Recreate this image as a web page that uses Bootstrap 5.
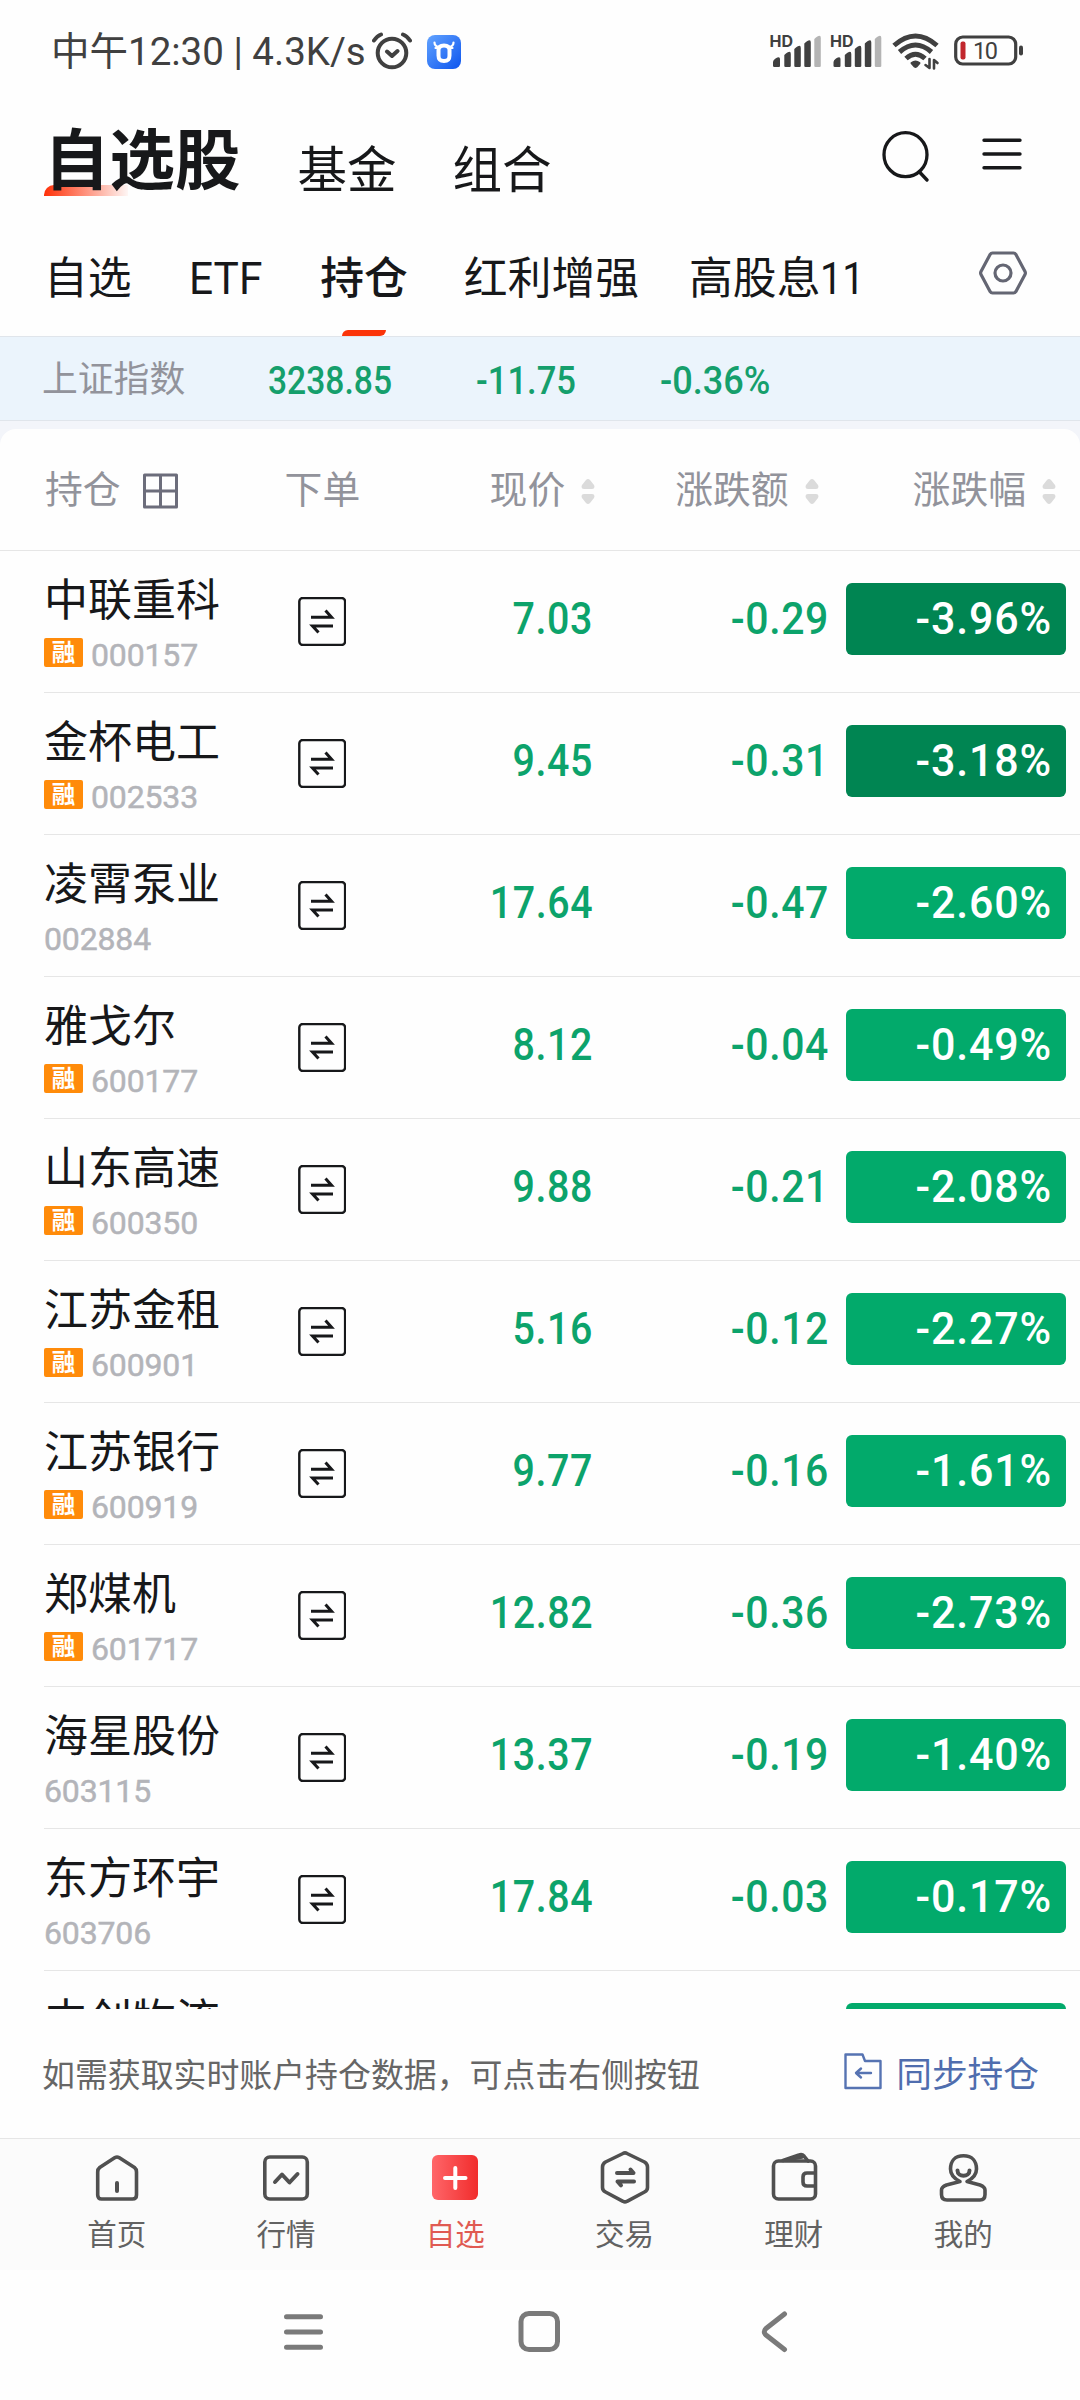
<!DOCTYPE html>
<html lang="zh-CN">
<head>
<meta charset="utf-8">
<meta name="viewport" content="width=device-width, initial-scale=1">
<title>自选股 - 持仓</title>
<link href="https://cdn.jsdelivr.net/npm/bootstrap@5.3.0/dist/css/bootstrap.min.css" rel="stylesheet">
<style>
body{width:1080px;height:2400px;overflow:hidden;background:#fefefe;color:#17181a;font-family:Roboto,"Noto Sans CJK SC",sans-serif;line-height:1}
svg{display:block;flex:none;fill:none;stroke-linecap:round;stroke-linejoin:round}
.statusbar{height:102px;padding:0 56px 0 51px;color:#404040;font-size:38.5px}
.clocktext{width:321px;white-space:pre;line-height:44px;padding-top:2px}
.titlebar{height:123px;padding:0 57px 0 44px}
.maintitle{font-size:65.5px;font-weight:700;line-height:76px;padding-left:0;margin-top:22px;position:relative}
.maintitle::before{content:"";position:absolute;left:0;top:61px;width:84px;height:11px;border-radius:10px 0 0 0;background:linear-gradient(90deg,#ff3008,#ff30080a)}
.maintitle span{position:relative}
.subtitle{font-size:49.5px;line-height:56px;margin-top:41px}
.tabs-line{height:111px;padding:0 53px 0 44px;font-size:43.8px}
.tabitem{line-height:50px;margin-top:29px;white-space:nowrap;position:relative}
.tabitem.current{font-weight:500}
.tabitem.current::after{content:"";position:absolute;left:22px;bottom:-32px;width:44px;height:6px;background:#fb3409;border-radius:6px 0 6px 0}
.squeeze{display:inline-block;transform-origin:0 50%}
.indexbar{height:85px;background:#ebf4fc;border-top:1px solid #e0e5eb;border-bottom:1px solid #e0e5eb;padding:4px 0 0 42px;font-size:35.8px;color:#92939b}
.indexnum{font-size:38px;font-weight:500;color:#159f6c;transform-origin:0 50%}
.sheetwrap{background:#f3f5fa;padding-top:8px}
.sheet{background:#fefefe;border-radius:16px 16px 0 0;height:1580px;overflow:hidden}
.headrow{height:121px;padding:3px 24px 0 45px;color:#92939b;font-size:37.8px}
.stockrow{height:142px;border-top:1px solid #e6e6e6;margin-left:44px;padding-right:14px}
.headrow+.stockrow{margin-left:0;padding-left:44px}
.namecol{width:254px;height:100px}
.stockname{font-size:44px;line-height:52px;white-space:nowrap;margin-top:3px}
.codeline{height:32px;margin-top:11px;gap:8px;color:#b3b4b9;font-size:32px}
.rong{width:39px;height:29px;background:#ff8b0a;border-radius:2px;color:#fff;font-size:23.5px;line-height:31px;text-align:center;font-weight:700}
.codeline b{font-weight:400;-webkit-text-stroke:.5px #b3b4b9;letter-spacing:-.15px;padding-top:1px}
.num{font-size:45px;font-weight:500;color:#0ca36b;text-align:right;margin-bottom:6px;letter-spacing:.7px;line-height:52px}
.num span,.pct span{display:inline-block;transform:scaleX(.91);transform-origin:100% 50%}
.price{width:247px}.delta{width:236px}
.num.price span{transform:scaleX(.875)}
.pct{width:220px;height:72px;margin-left:17px;margin-bottom:5px;background:#02aa6b;border-radius:6px;color:#fff;font-size:45px;font-weight:500;letter-spacing:.9px;line-height:71px;text-align:right;padding-right:14px}
.pct span{transform:scaleX(.955)}
.pct.deep{background:#008552}
.syncbar{height:129px;padding:5px 41px 0 42px;color:#666;font-size:32.9px}
.synclink{color:#4f6dae;font-size:35.7px;gap:14px}
.bottomnav{height:132px;background:#fbfbfb;border-top:1px solid #e6e6e6;padding:0 32px;color:#626262;font-size:29.5px}
.navcell{width:169.3px;padding-top:10px}
.navcell svg{margin-bottom:13px}
.navcell div{line-height:34px}
.sysnav{height:130px}
</style>
</head>
<body>
<svg width="0" height="0" class="position-absolute"><defs>
<g id="swap"><rect x="1.300" y="1" width="45.800" height="47" rx="3.500" stroke="#17181a" stroke-width="2.400"/><path d="M13 20.200H33.500L27.500 13.600M35 29H14.500L20.500 35.600" stroke="#17181a" stroke-width="3" stroke-linecap="butt" stroke-linejoin="miter"/></g>
<g id="sort"><path d="M7 0Q8 0 9 1L13 6Q14.500 10 11 10H3Q-.5 10 1 6L5 1Q6 0 7 0ZM7 25Q8 25 9 24L13 19Q14.500 15 11 15H3Q-.5 15 1 19L5 24Q6 25 7 25Z" fill="#dbdbdb"/></g>
<g id="bars" fill="#404040"><path d="M2 32V28Q2 26 4.500 24.500Q9 22 9 25V32Q9 33 8 33H3.500Q2 33 2 32ZM13.300 32V21Q19.800 15 19.800 20V32Q19.800 33 18.500 33H14.600Q13.300 33 13.300 32ZM23.300 32V15Q29.800 9 29.800 14V32Q29.800 33 28.500 33H24.600Q23.300 33 23.300 32ZM33.300 32V9.500Q39.800 3.500 39.800 8.500V32Q39.800 33 38.500 33H34.600Q33.300 33 33.300 32Z"/><path d="M43.300 32V5Q49.800 -1 49.800 4V32Q49.800 33 48.500 33H44.600Q43.300 33 43.300 32Z" fill="#b4b4b4"/></g>
<linearGradient id="bluebg" x1="0" y1="0" x2="1" y2="1"><stop stop-color="#62a3ff"/><stop offset="1" stop-color="#0d55ee"/></linearGradient>
<linearGradient id="redbg"><stop stop-color="#ff6669"/><stop offset="1" stop-color="#f12c2c"/></linearGradient>
</defs></svg>

<header class="statusbar d-flex align-items-center">
  <div class="clocktext">中午12:30 | 4.3K/s</div>
  <svg width="40" height="38" viewBox="0 0 40 38" stroke="#404040"><circle cx="20" cy="21" r="14.300" stroke-width="4"/><path d="M2 8.500Q5 4 9 2.500M31 2.500Q35 4 38 8.500M15 19.500L20 24L25.500 19" stroke-width="4"/></svg>
  <svg style="margin:1px 0 0 15px" width="34" height="34" viewBox="0 0 34 34"><rect width="34" height="34" rx="8" fill="url(#bluebg)"/><path d="M17 10.500C21 10.500 22.500 12 22.500 15V20.500C22.500 24.500 21 26 17 26S11.500 24.500 11.500 20.500V15C11.500 12 13 10.500 17 10.500Z" stroke="#fff" stroke-width="4"/><path d="M7.500 7.500Q7.500 11 11.500 12M26.500 7.500Q26.500 11 22.500 12M8.500 13H11M23 13H25.500" stroke="#fff" stroke-width="2.200"/></svg>
  <div class="d-flex ms-auto align-items-center">
    <svg width="62" height="34" viewBox="-3 0 62 34"><use href="#bars"/><text x="-1.500" y="13" font-family="Inter,sans-serif" font-size="16" font-weight="700" fill="#404040">HD</text></svg>
    <svg width="62" height="34" viewBox="-1.500 0 62 34"><use href="#bars"/><text x="-1.400" y="13" font-family="Inter,sans-serif" font-size="16" font-weight="700" fill="#404040">HD</text></svg>
    <svg width="62" height="38" viewBox="0 0 62 38" stroke="#404040"><g stroke-width="5" stroke-linecap="butt"><path d="M2 13.500Q23.500 -5.500 45 13.500M7.500 20Q23.500 6 39.500 20M14 26.500Q23.500 18 33 26.500"/></g><path d="M19.500 31Q23.500 28 27.500 31L24.500 34.500Q23.500 35.300 22.500 34.500Z" stroke-width="2" fill="#404040"/><path d="M37.500 27V36L33.500 33M42 36.500V28L45.500 31" stroke-width="2.600"/></svg>
    <svg width="70" height="34" viewBox="0 0 70 34"><rect x="1.700" y="3" width="60" height="27" rx="7" stroke="#404040" stroke-width="3.200"/><rect x="6.500" y="7.500" width="5" height="18" rx="2" fill="#c1272d"/><rect x="65" y="11.500" width="4" height="10" rx="2" fill="#404040"/><text x="19" y="25" font-size="23.500" font-family="Roboto,sans-serif" textLength="25" fill="#404040">10</text></svg>
  </div>
</header>

<div class="titlebar d-flex align-items-start">
  <h1 class="maintitle mb-0"><span>自选股</span></h1>
  <div class="subtitle" style="margin-left:57px">基金</div>
  <div class="subtitle" style="margin-left:56px">组合</div>
  <svg class="ms-auto" style="margin-top:28px" width="48" height="52" viewBox="0 0 48 52" stroke="#17181a" stroke-width="3.300"><ellipse cx="24.500" cy="24.700" rx="21.500" ry="22"/><path d="M38.500 42L46 50"/></svg>
  <svg style="margin:36px 1px 0 53px" width="40" height="32" viewBox="0 0 40 32" stroke="#17181a" stroke-width="3.400"><path d="M2 2.300H38M2 16H38M2 29.800H38"/></svg>
</div>

<nav class="tabs-line d-flex align-items-start">
  <div class="tabitem">自选</div>
  <div class="tabitem" style="margin-left:57px"><span class="squeeze" style="transform:scaleX(.97)">ETF</span></div>
  <div class="tabitem current" style="margin-left:56px">持仓</div>
  <div class="tabitem" style="margin-left:56px">红利增强</div>
  <div class="tabitem" style="margin-left:50px">高股息<span class="squeeze" style="transform:scaleX(.9)">11</span></div>
  <svg class="ms-auto" style="margin-top:26px" width="48" height="44" viewBox="0 0 48 44" stroke="#646673" stroke-width="3.200"><path d="M13.500 2H34.500Q36 2 36.800 3.300L46 20.500Q46.800 22 46 23.500L36.800 40.700Q36 42 34.500 42H13.500Q12 42 11.200 40.700L2 23.500Q1.200 22 2 20.500L11.200 3.300Q12 2 13.500 2Z"/><circle cx="24" cy="22" r="8"/></svg>
</nav>

<div class="indexbar d-flex align-items-center">
  <div style="width:226px">上证指数</div>
  <div class="indexnum" style="width:208px;transform:scaleX(.885)">3238.85</div>
  <div class="indexnum" style="width:184px;transform:scaleX(.91)">-11.75</div>
  <div class="indexnum" style="transform:scaleX(.95)">-0.36%</div>
</div>

<div class="sheetwrap"><main class="sheet">
  <div class="headrow d-flex align-items-center">
    <div>持仓</div>
    <svg style="margin-left:21px" width="37" height="37" viewBox="0 0 37 37" stroke="#6c6d7b" stroke-width="3" stroke-linejoin="miter"><path d="M2.500 2H34.500V34H2.500ZM18.500 2V34M2.500 18H34.500"/></svg>
    <div style="margin-left:106px">下单</div>
    <div class="ms-auto">现价</div><svg style="margin-left:16px" width="14" height="25"><use href="#sort"/></svg>
    <div style="margin-left:80px">涨跌额</div><svg style="margin-left:16px" width="14" height="25"><use href="#sort"/></svg>
    <div style="margin-left:94px">涨跌幅</div><svg style="margin-left:16px" width="14" height="25"><use href="#sort"/></svg>
  </div>
  <div class="stockrow d-flex align-items-center"><div class="namecol"><div class="stockname">中联重科</div><div class="codeline d-flex"><span class="rong">融</span><b>000157</b></div></div><svg width="48" height="49"><use href="#swap"/></svg><div class="num price"><span>7.03</span></div><div class="num delta"><span>-0.29</span></div><div class="pct deep"><span>-3.96%</span></div></div>
  <div class="stockrow d-flex align-items-center"><div class="namecol"><div class="stockname">金杯电工</div><div class="codeline d-flex"><span class="rong">融</span><b>002533</b></div></div><svg width="48" height="49"><use href="#swap"/></svg><div class="num price"><span>9.45</span></div><div class="num delta"><span>-0.31</span></div><div class="pct deep"><span>-3.18%</span></div></div>
  <div class="stockrow d-flex align-items-center"><div class="namecol"><div class="stockname">凌霄泵业</div><div class="codeline d-flex"><b>002884</b></div></div><svg width="48" height="49"><use href="#swap"/></svg><div class="num price"><span>17.64</span></div><div class="num delta"><span>-0.47</span></div><div class="pct"><span>-2.60%</span></div></div>
  <div class="stockrow d-flex align-items-center"><div class="namecol"><div class="stockname">雅戈尔</div><div class="codeline d-flex"><span class="rong">融</span><b>600177</b></div></div><svg width="48" height="49"><use href="#swap"/></svg><div class="num price"><span>8.12</span></div><div class="num delta"><span>-0.04</span></div><div class="pct"><span>-0.49%</span></div></div>
  <div class="stockrow d-flex align-items-center"><div class="namecol"><div class="stockname">山东高速</div><div class="codeline d-flex"><span class="rong">融</span><b>600350</b></div></div><svg width="48" height="49"><use href="#swap"/></svg><div class="num price"><span>9.88</span></div><div class="num delta"><span>-0.21</span></div><div class="pct"><span>-2.08%</span></div></div>
  <div class="stockrow d-flex align-items-center"><div class="namecol"><div class="stockname">江苏金租</div><div class="codeline d-flex"><span class="rong">融</span><b>600901</b></div></div><svg width="48" height="49"><use href="#swap"/></svg><div class="num price"><span>5.16</span></div><div class="num delta"><span>-0.12</span></div><div class="pct"><span>-2.27%</span></div></div>
  <div class="stockrow d-flex align-items-center"><div class="namecol"><div class="stockname">江苏银行</div><div class="codeline d-flex"><span class="rong">融</span><b>600919</b></div></div><svg width="48" height="49"><use href="#swap"/></svg><div class="num price"><span>9.77</span></div><div class="num delta"><span>-0.16</span></div><div class="pct"><span>-1.61%</span></div></div>
  <div class="stockrow d-flex align-items-center"><div class="namecol"><div class="stockname">郑煤机</div><div class="codeline d-flex"><span class="rong">融</span><b>601717</b></div></div><svg width="48" height="49"><use href="#swap"/></svg><div class="num price"><span>12.82</span></div><div class="num delta"><span>-0.36</span></div><div class="pct"><span>-2.73%</span></div></div>
  <div class="stockrow d-flex align-items-center"><div class="namecol"><div class="stockname">海星股份</div><div class="codeline d-flex"><b>603115</b></div></div><svg width="48" height="49"><use href="#swap"/></svg><div class="num price"><span>13.37</span></div><div class="num delta"><span>-0.19</span></div><div class="pct"><span>-1.40%</span></div></div>
  <div class="stockrow d-flex align-items-center"><div class="namecol"><div class="stockname">东方环宇</div><div class="codeline d-flex"><b>603706</b></div></div><svg width="48" height="49"><use href="#swap"/></svg><div class="num price"><span>17.84</span></div><div class="num delta"><span>-0.03</span></div><div class="pct"><span>-0.17%</span></div></div>
  <div class="stockrow d-flex align-items-center"><div class="namecol"><div class="stockname">中创物流</div></div><div class="pct ms-auto"></div></div>
</main></div>

<div class="syncbar d-flex align-items-center justify-content-between">
  <div>如需获取实时账户持仓数据，可点击右侧按钮</div>
  <div class="synclink d-flex align-items-center"><svg style="margin-top:-8px" width="38" height="37" viewBox="0 0 38 37" stroke="#5673b2" stroke-width="2.400" stroke-linejoin="miter"><path d="M1.500 1.500H18.500L21 8H36.500V35H1.500Z"/><path d="M27 20H12.500M17 15.500L12 20L17 24.500"/></svg><span>同步持仓</span></div>
</div>

<nav class="bottomnav d-flex text-center">
  <div class="navcell d-flex flex-column align-items-center"><svg width="56" height="56" viewBox="0 0 56 56" stroke="#505050" stroke-width="3.600"><path d="M26 8.600Q28 7.400 30 8.600L45.500 18.500Q47.500 20 47.500 23V46Q47.500 50 43.500 50H12.500Q8.700 50 8.700 46V23Q8.700 20 10.700 18.500Z"/><path d="M28 34V42" stroke-width="4"/></svg><div>首页</div></div>
  <div class="navcell d-flex flex-column align-items-center"><svg width="56" height="56" viewBox="0 0 56 56" stroke="#505050" stroke-width="3.600"><rect x="6.800" y="8" width="42.500" height="42" rx="5"/><path d="M17 33L24 25.500L31.500 33.500L39.500 25" stroke-width="4"/></svg><div>行情</div></div>
  <div class="navcell d-flex flex-column align-items-center" style="color:#e05a52"><svg width="56" height="56" viewBox="0 0 56 56"><rect x="5" y="6" width="46" height="45" rx="6" fill="url(#redbg)"/><path d="M18 29H38.500M28.300 19V39" stroke="#fff" stroke-width="4"/></svg><div>自选</div></div>
  <div class="navcell d-flex flex-column align-items-center"><svg width="56" height="56" viewBox="0 0 56 56" stroke="#505050" stroke-width="3.600"><path d="M26 4.500Q28 3.200 30 4.500L47.500 13Q50.500 15 50.500 18V38.500Q50.500 41.500 47.500 43L30 52.300Q28 53.500 26 52.300L8.500 43Q5.500 41.500 5.500 38.500V18Q5.500 15 8.500 13Z"/><path d="M20 24H36.500L33.500 20.500M37 32.500H20.500L24 36.300" stroke-width="4"/></svg><div>交易</div></div>
  <div class="navcell d-flex flex-column align-items-center"><svg width="56" height="56" viewBox="0 0 56 56" stroke="#505050" stroke-width="3.600"><rect x="7.500" y="12" width="42" height="38" rx="5"/><path d="M17 11.500L33 6Q36 4.800 38 7L42 12M20 11L36 8M49 24H41Q37 24 37 28V33Q37 37 41 37H49"/></svg><div>理财</div></div>
  <div class="navcell d-flex flex-column align-items-center"><svg width="56" height="56" viewBox="0 0 56 56" stroke="#505050" stroke-width="3.600"><path d="M25 32.500C18 29 15.500 25 15.500 20C15.500 12 20 6.800 28.500 6.800S41.500 12 41.500 20C41.500 25 39 29 32 32.500L45 36Q50 38 50 41V45.500Q50 51 45 51H12Q6.500 51 6.500 45.500V41Q6.500 38 11.500 36Z"/><path d="M22.500 21.500C22.500 28.500 34.500 28.500 34.500 21.500" stroke-width="4"/></svg><div>我的</div></div>
</nav>

<div class="sysnav d-flex" style="padding:38px 0 0 282px">
  <svg width="42" height="48" viewBox="0 0 42 48" stroke="#7a7a7a" stroke-width="5"><path d="M4.500 8.700H38.500M4.500 24H38.500M4.500 39.300H38.500"/></svg>
  <svg style="margin-left:192px" width="48" height="48" viewBox="0 0 48 48" stroke="#7a7a7a" stroke-width="5"><rect x="5" y="5.500" width="36.500" height="36" rx="8"/></svg>
  <svg style="margin-left:196px" width="32" height="48" viewBox="0 0 32 48" stroke="#7a7a7a" stroke-width="5"><path d="M24.500 6L6 20.500Q2.500 24 6 27L24.500 41.500"/></svg>
</div>
<script src="https://cdn.jsdelivr.net/npm/bootstrap@5.3.0/dist/js/bootstrap.bundle.min.js"></script>
</body>
</html>
